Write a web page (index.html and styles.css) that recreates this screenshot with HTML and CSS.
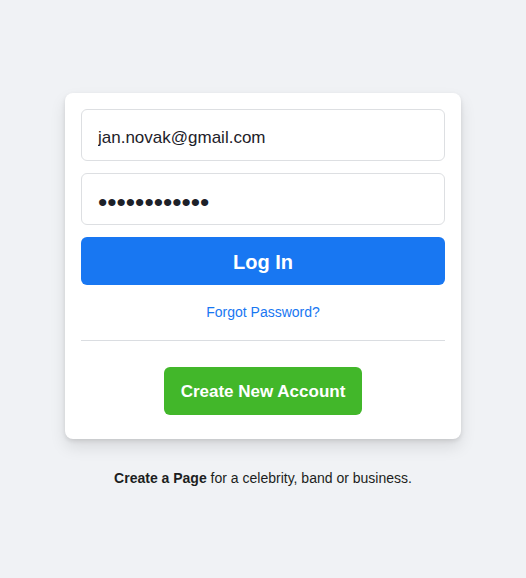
FILE: index.html
```html
<!DOCTYPE html>
<html lang="en">
<head>
<meta charset="utf-8">
<title>Log In</title>
<link rel="stylesheet" href="styles.css">
</head>
<body>
<main class="page">
  <form class="card">
    <input class="field" type="text" value="jan.novak@gmail.com">
    <input class="field field-pass" type="password" value="secretpass12">
    <button class="login" type="button">Log In</button>
    <a class="forgot" href="#">Forgot Password?</a>
    <div class="divider"></div>
    <div class="create-wrap">
      <button class="create" type="button">Create New Account</button>
    </div>
  </form>
  <p class="footer"><b>Create a Page</b> for a celebrity, band or business.</p>
</main>
</body>
</html>
```
FILE: styles.css
```css
html, body {
  margin: 0;
  padding: 0;
  background: #f0f2f5;
  font-family: "Liberation Sans", Arial, Helvetica, sans-serif;
  color: #1c1e21;
}
.page {
  display: flex;
  flex-direction: column;
  align-items: center;
  padding-top: 93px;
}
.card {
  box-sizing: border-box;
  width: 396px;
  background: #fff;
  border-radius: 8px;
  box-shadow: 0 2px 4px rgba(0,0,0,.1), 0 8px 16px rgba(0,0,0,.1);
  padding: 16px 16px 24px;
  display: flex;
  flex-direction: column;
}
.field {
  box-sizing: border-box;
  height: 52px;
  width: 100%;
  border: 1px solid #dddfe2;
  border-radius: 6px;
  padding: 20px 16px 14px;
  font-family: inherit;
  font-size: 17px;
  color: #1d2129;
  margin: 0 0 12px;
  outline: none;
  background: #fff;
}
.field-pass {
  font-size: 26.5px;
  padding: 16px 16px 10px;
  letter-spacing: 0;
}
.login {
  height: 48px;
  width: 100%;
  border: none;
  border-radius: 6px;
  background: #1877f2;
  color: #fff;
  font-family: inherit;
  font-size: 20px;
  font-weight: bold;
  padding: 2px 16px 0;
}
.forgot {
  margin-top: 17px;
  line-height: 20px;
  font-size: 14px;
  color: #1877f2;
  text-decoration: none;
  text-align: center;
  align-self: center;
}
.divider {
  border-bottom: 1px solid #dadde1;
  margin-top: 18px;
}
.create-wrap {
  display: flex;
  justify-content: center;
  padding-top: 26px;
}
.create {
  height: 48px;
  border: none;
  border-radius: 6px;
  background: #42b72a;
  color: #fff;
  font-family: inherit;
  font-size: 17px;
  font-weight: bold;
  padding: 2px 17px 0;
}
.footer {
  margin: 31px 0 0;
  font-size: 14px;
  line-height: 16px;
  color: #1c1e21;
}
.footer b {
  font-weight: bold;
}
```
